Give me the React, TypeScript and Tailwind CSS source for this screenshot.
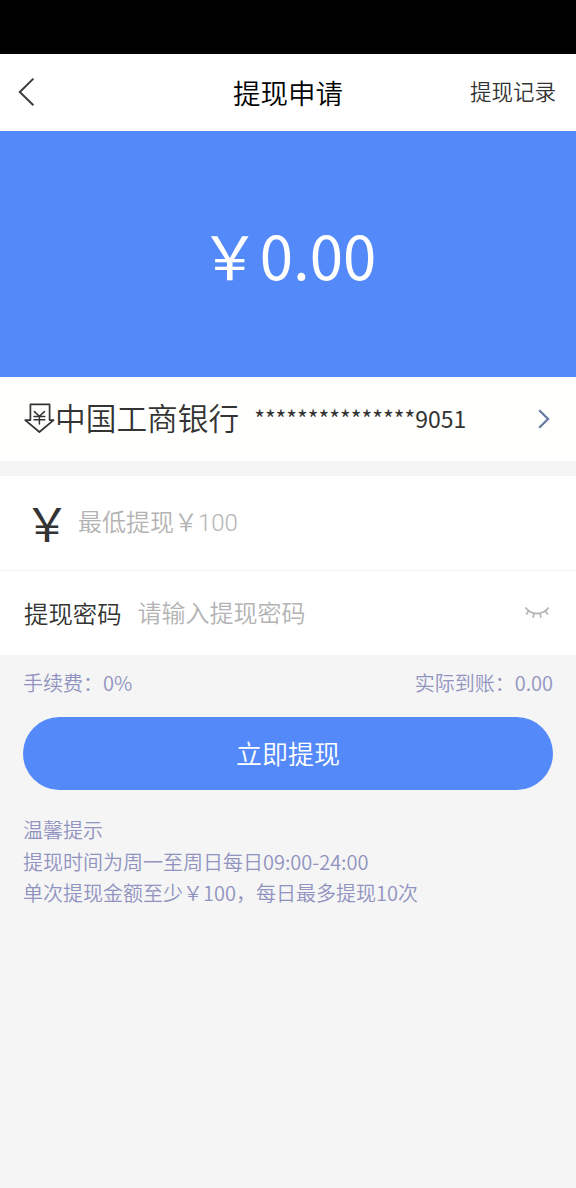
import { useState } from 'react'

const tips = ['温馨提示', '提现时间为周一至周日每日09:00-24:00', '单次提现金额至少￥100，每日最多提现10次']

function BackIcon() {
  return (
    <svg width="18" height="30" viewBox="0 0 18 30" fill="none" stroke="#3c3c40" strokeWidth="2">
      <path d="M15.4 1.6 1.8 15l13.6 13.2" />
    </svg>
  )
}

function WithdrawIcon() {
  return (
    <svg
      width="32"
      height="32"
      viewBox="0 0 32 32"
      fill="none"
      stroke="#333"
      strokeWidth="1.7"
      strokeLinejoin="round"
      strokeLinecap="round"
    >
      <path d="M7.4 2.4h19.2v15.7h4L16.4 30 2.2 18.1h5.2z" />
      <path d="m11.4 9.6 5 4.6 5-4.6M11 14.4h10.8M11 17.7h10.8M16.4 14.2v7.8" strokeWidth="1.5" />
    </svg>
  )
}

function ChevronIcon() {
  return (
    <svg width="12" height="20" viewBox="0 0 12 20" fill="none" stroke="#637a9f" strokeWidth="2.2">
      <path d="m1.2 1.2 8.9 8.8-8.9 8.8" />
    </svg>
  )
}

function EyeClosedIcon() {
  return (
    <svg width="26" height="14" viewBox="0 0 26 14" fill="none" stroke="#b4b4b4" strokeWidth="1.7">
      <path d="M1.3 1.6c6.2 8 17.2 8 23.4 0M4.8 4.8 2.3 8.4M10 7.3l-1 4.4M16 7.3l1 4.4M21.2 4.8l2.5 3.6" />
    </svg>
  )
}

export default function App() {
  const [amount, setAmount] = useState('')
  const [password, setPassword] = useState('')

  return (
    <div
      lang="zh-CN"
      className="flex h-[1188px] w-[576px] flex-col bg-[#f5f5f5] font-['Noto_Sans_CJK_SC',sans-serif] font-[350] text-[#333]"
    >
      <div className="h-[54px] shrink-0 bg-black" />

      <header className="grid h-[76.6px] shrink-0 grid-cols-[1fr_auto_1fr] items-center bg-white pr-[20px] pl-[18px]">
        <button aria-label="返回" className="justify-self-start pb-px">
          <BackIcon />
        </button>
        <h1 className="pl-[2px] text-[27.5px] leading-10 font-[350] text-black">提现申请</h1>
        <button className="justify-self-end pb-[2px] text-[21.5px] leading-8">提现记录</button>
      </header>

      <section className="flex h-[246px] shrink-0 items-center justify-center bg-[#5389f8] text-[60px] leading-[80px] font-normal text-white">
        ￥0.00
      </section>

      <section className="flex h-[84.4px] shrink-0 items-center bg-[#fffffd] pr-[26px] pl-[23px]">
        <span className="pb-px">
          <WithdrawIcon />
        </span>
        <span className="pb-[3px] text-[30.7px] leading-10">中国工商银行</span>
        <span className="ml-[15px] pb-px text-[23px] leading-8 font-normal">***************9051</span>
        <span className="ml-auto">
          <ChevronIcon />
        </span>
      </section>

      <section className="mt-[15px] flex shrink-0 flex-col bg-white">
        <label className="flex h-[95px] items-center border-b-[1.5px] border-[#f2f2f2] pl-[24px]">
          <span className="pb-[3px] text-[46px] leading-[60px] font-normal">￥</span>
          <input
            value={amount}
            onChange={(e) => setAmount(e.target.value)}
            placeholder="最低提现￥100"
            className="ml-2 h-10 flex-1 bg-transparent font-['Roboto','Noto_Sans_CJK_SC',sans-serif] text-[24px] outline-none placeholder:text-[#b3b3b3]"
          />
        </label>
        <label className="flex h-[84px] items-center pr-[26px] pl-[24px]">
          <span className="text-[24.4px] leading-9">提现密码</span>
          <input
            type="password"
            value={password}
            onChange={(e) => setPassword(e.target.value)}
            placeholder="请输入提现密码"
            className="ml-4 h-10 min-w-0 flex-1 bg-transparent pb-[3px] text-[24px] outline-none placeholder:text-[#b3b3b3]"
          />
          <EyeClosedIcon />
        </label>
      </section>

      <div className="mt-[12px] flex shrink-0 justify-between px-[23px] text-[20px] leading-8 text-[#9093bf]">
        <span>手续费：0%</span>
        <span>实际到账：0.00</span>
      </div>

      <button className="mx-[23px] mt-[18px] h-[73.5px] shrink-0 rounded-full bg-[#5389f8] pb-[3px] text-[26px] text-white">
        立即提现
      </button>

      <div className="mt-[24px] px-[23px] text-[20px] leading-[31.5px] text-[#9093bf]">
        {tips.map((tip) => (
          <p key={tip}>{tip}</p>
        ))}
      </div>
    </div>
  )
}
